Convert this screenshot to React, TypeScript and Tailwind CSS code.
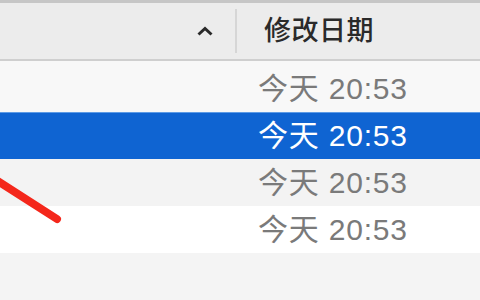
import React from "react";

const font = { fontFamily: '"Liberation Sans", "Noto Sans CJK SC", sans-serif' };

function Row({ bg, selected }: { bg: string; selected?: boolean }) {
  return (
    <div className={`h-[47px] flex items-center ${bg}`}>
      <div className="w-[258px] shrink-0" />
      <span
        className={`text-[30px] leading-none tracking-[0.8px] ${selected ? "text-white" : "text-[#7a7a7a]"}`}
      >
        今天 20:53
      </span>
    </div>
  );
}

export default function App() {
  return (
    <div className="relative w-[480px] h-[300px] overflow-hidden bg-[#f4f4f4]" style={font}>
      <div className="h-[3px] bg-[#c6c6c6]" />
      <div className="h-[56px] bg-[#ececec] flex items-center">
        <div className="w-[196px] shrink-0" />
        <svg width="18" height="12" viewBox="0 0 18 12" className="shrink-0">
          <path d="M2.5 9.5 L9 3.5 L15.5 9.5" fill="none" stroke="#2a2a2a" strokeWidth="3" />
        </svg>
        <div className="w-[21px] shrink-0" />
        <div className="w-[2px] h-[44px] bg-[#d6d6d6] shrink-0" />
        <div className="w-[27px] shrink-0" />
        <span className="text-[27px] leading-none font-medium text-[#2a2a2a] tracking-[0.5px]">修改日期</span>
      </div>
      <div className="h-[2px] bg-[#cfcfcf]" />
      <div className="h-[4px] bg-[#f8f8f8]" />
      <Row bg="bg-[#f8f8f8]" />
      <div className="border-t border-[#5d9be6]">
        <div className="h-[46px] flex items-center bg-[#0f64d2]">
          <div className="w-[258px] shrink-0" />
          <span className="text-[30px] leading-none tracking-[0.8px] text-white">今天 20:53</span>
        </div>
      </div>
      <Row bg="bg-[#f3f3f3]" />
      <Row bg="bg-white" />
      <svg className="absolute left-0 top-0" width="480" height="300">
        <path d="M-4 180 L57 219" stroke="#f4271b" strokeWidth="8" strokeLinecap="round" />
      </svg>
    </div>
  );
}
